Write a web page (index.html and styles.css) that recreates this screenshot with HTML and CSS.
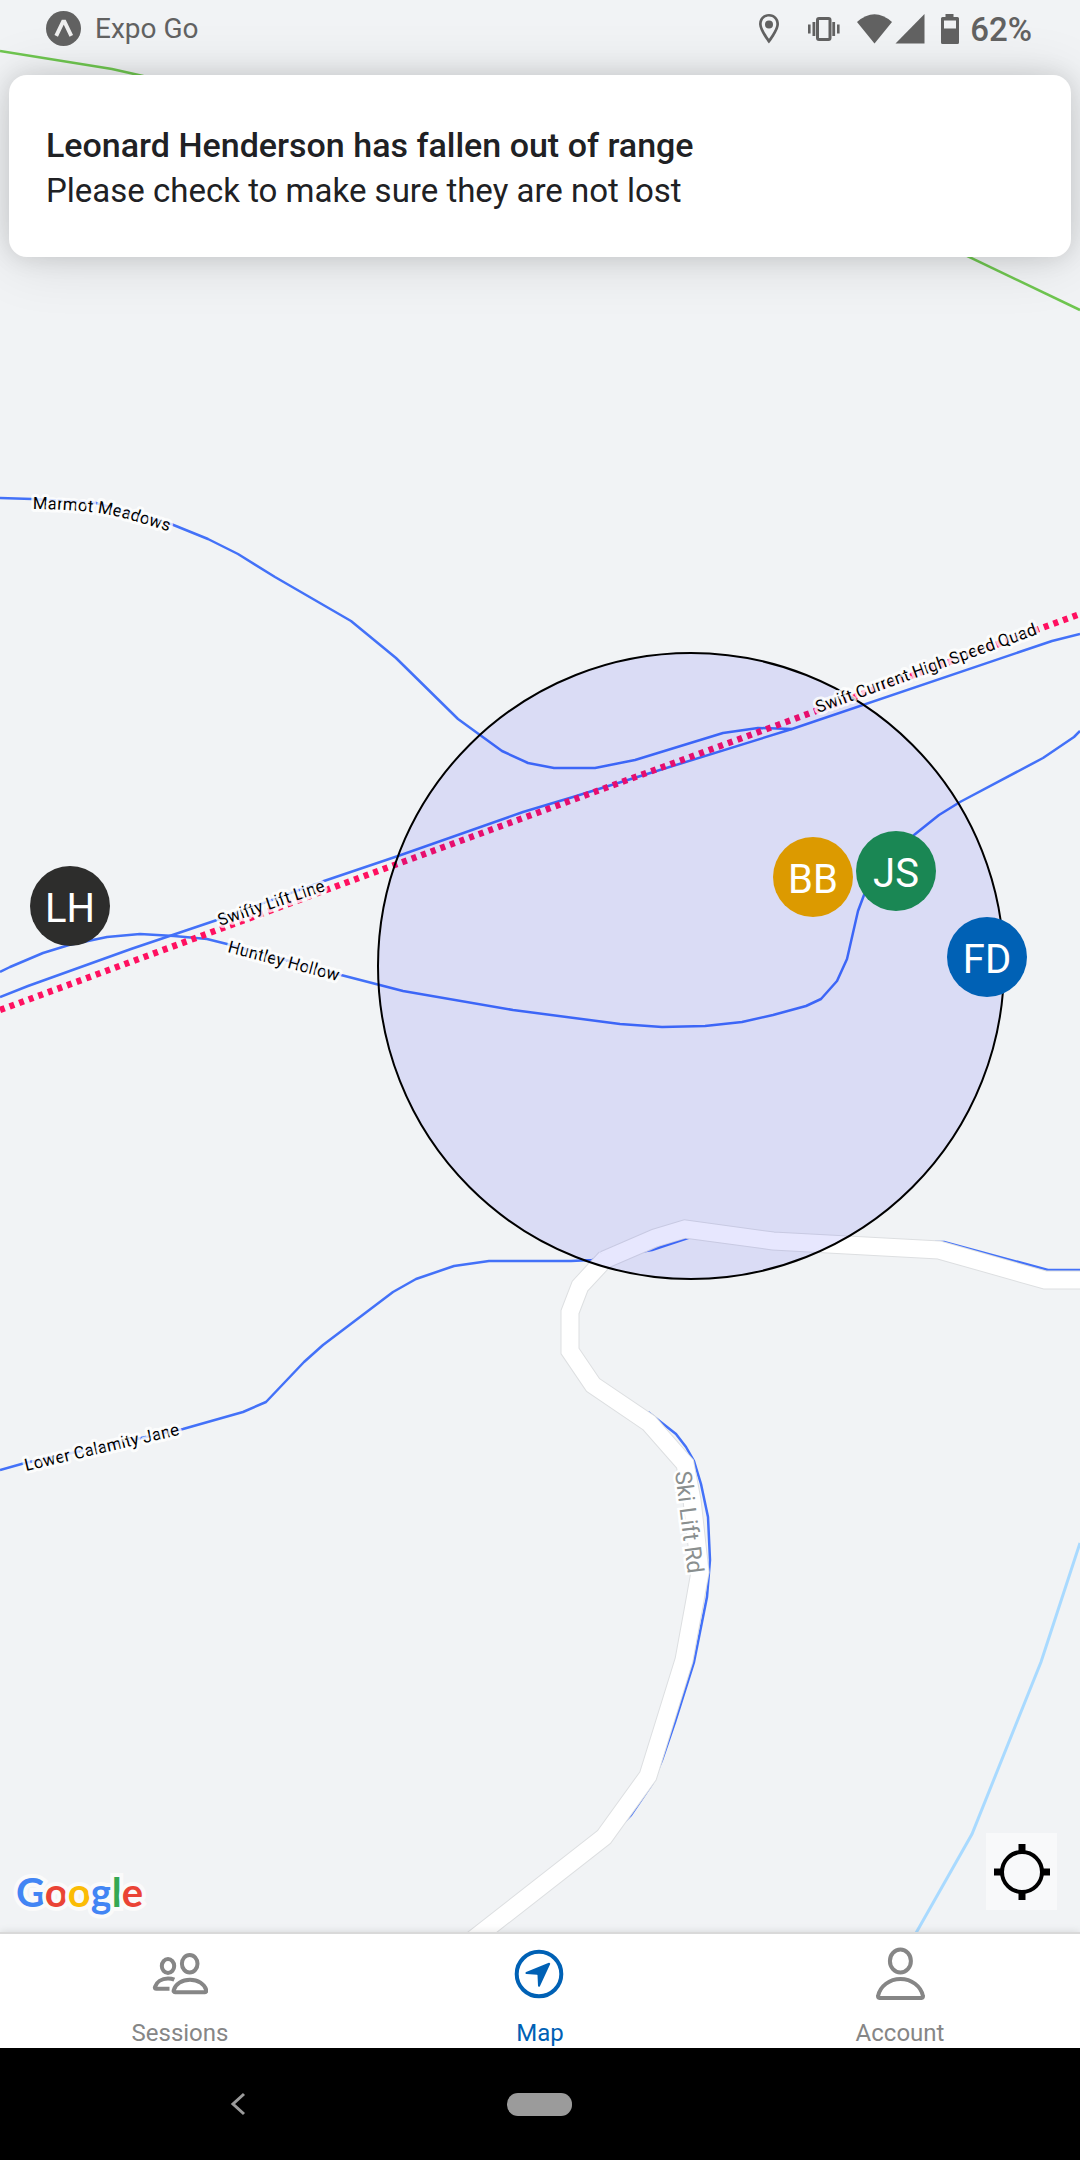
FILE: index.html
```html
<!DOCTYPE html>
<html lang="en">
<head>
<meta charset="utf-8">
<meta name="viewport" content="width=device-width, initial-scale=1">
<title>Map</title>
<link rel="stylesheet" href="styles.css">
</head>
<body>
<main class="map-screen">
  <svg class="map" viewBox="0 0 1080 1932" preserveAspectRatio="xMidYMid slice" role="group" aria-label="Trail map">
    <defs>
      <path id="label-marmot" d="M33 509 Q60 509 91 512 Q116 515 138 522 L180 535"/>
      <path id="label-swifty" d="M220 926 L340 886"/>
      <path id="label-huntley" d="M227 952 L360 987"/>
      <path id="label-calamity" d="M26 1471 L200 1430"/>
      <path id="label-quad" d="M818 713 L1080 619"/>
      <path id="label-road" d="M675 1472 L690 1592"/>
    </defs>

    <g class="boundary">
      <path d="M0 51 L112 69 L143 76 L180 90"/>
      <path d="M940 243 L1080 310"/>
    </g>
    <path class="river" d="M1080 1543 L1041 1662 L972 1834 L916 1933"/>

    <g class="trail">
      <path d="M0 498 L32 499 L96 503 L171 524 L208 539 L238 554 L275 577 L351 621 L396 658 L458 719 L502 751 L528 763 L554 768 L595 768 L635 760 L723 733 L758 728 L792 729"/>
      <path d="M0 997 L28 986 L131 949 L217 920 L324 881 L398 856 L523 812 L573 797 L647 774 L792 729 L1052 641 L1080 634"/>
      <path d="M0 972 L10 967 L43 953 L69 945 L107 937 L140 934 L174 936 L207 939 L227 944 L341 975 L403 991 L513 1010 L620 1024 L662 1027 L705 1026 L742 1022 L773 1015 L806 1006 L821 999 L837 981 L847 959 L858 911 L864 895 L890 856 L914 835 L939 815 L960 802 L1043 758 L1074 737 L1080 731"/>
      <path d="M0 1470 L25 1463 L183 1429 L243 1412 L266 1402 L304 1362 L323 1345 L393 1292 L416 1279 L454 1266 L489 1261 L571 1261 L592 1260 L652 1250 L688 1238 L700 1235"/>
      <path d="M935 1242 L944 1242 L1048 1270 L1080 1270"/>
      <path d="M648 1412 L676 1434 L686 1447 L694 1461 L701 1484 L708 1517 L710 1560 L707 1597 L694 1662 L675 1722 L662 1760 L652 1784 L631 1815 L612 1834"/>
    </g>

    <path class="lift" d="M0 1010 L367 875 L775 726 L1080 614"/>

    <g class="road-edge">
      <path d="M604 1260 L655 1238 L685 1229 L773 1241 L939 1250 L1045 1280 L1090 1280"/>
      <path d="M606 1258 L580 1286 L570 1312 L570 1351 L593 1385 L649 1423 L685 1464 L692 1500 L700 1572 L695 1600 L684 1660 L648 1776 L604 1837 L457 1952"/>
    </g>
    <g class="road">
      <path d="M604 1260 L655 1238 L685 1229 L773 1241 L939 1250 L1045 1280 L1090 1280"/>
      <path d="M606 1258 L580 1286 L570 1312 L570 1351 L593 1385 L649 1423 L685 1464 L692 1500 L700 1572 L695 1600 L684 1660 L648 1776 L604 1837 L457 1952"/>
    </g>

    <circle class="range" cx="691" cy="966" r="313"/>

    <g class="label">
      <text><textPath href="#label-marmot">Marmot Meadows</textPath></text>
      <text><textPath href="#label-swifty">Swifty Lift Line</textPath></text>
      <text><textPath href="#label-huntley">Huntley Hollow</textPath></text>
      <text><textPath href="#label-calamity">Lower Calamity Jane</textPath></text>
      <text><textPath href="#label-quad">Swift Current High Speed Quad</textPath></text>
    </g>
    <text class="road-label"><textPath href="#label-road">Ski Lift Rd</textPath></text>

    <g class="pin">
      <circle class="pin-lh" cx="70" cy="906" r="40"/><text x="70" y="922">LH</text>
      <circle class="pin-bb" cx="813" cy="877" r="40"/><text x="813" y="893">BB</text>
      <circle class="pin-js" cx="896" cy="871" r="40"/><text x="896" y="887">JS</text>
      <circle class="pin-fd" cx="987" cy="957" r="40"/><text x="987" y="973">FD</text>
    </g>
  </svg>

  <header class="status-bar">
    <svg class="expo" viewBox="0 0 36 36" aria-hidden="true"><circle cx="18" cy="18" r="18"/><path d="M10.500 25.500L17.500 11h1.500L26 25.500"/></svg>
    <span class="app-name">Expo Go</span>
    <svg class="status-icons" viewBox="0 0 204 34" aria-hidden="true">
      <path fill-rule="evenodd" d="M12 3C6 3 2 7.500 2 13c0 7 10 19.500 10 19.500S22 20 22 13C22 7.500 18 3 12 3zm0 2.600c4.400 0 7.300 3.300 7.300 7.400 0 4.200-4.600 11-7.300 14.800C9.300 24 4.700 17.200 4.700 13c0-4.100 2.900-7.400 7.300-7.400z"/><circle cx="12" cy="13.500" r="4"/>
      <rect class="outline" x="60.500" y="7.500" width="12.500" height="21" rx="1.500"/>
      <path d="M55.500 11h2.800v14h-2.800zM51 13.500h2.600v9h-2.600zM75.300 11h2.800v14h-2.800zM80 13.500h2.600v9h-2.600z"/>
      <path d="M100 11Q117.500-4.500 135 11L117.500 32.500z"/>
      <path d="M138.500 32.500L167.500 3v29.500z"/>
      <path fill-rule="evenodd" d="M188.500 3h8v3h4q1.500 0 1.500 1.500v24q0 1.500-1.500 1.500h-15q-1.500 0-1.500-1.500v-24Q184 6 185.500 6h3zM187 9.500v8h12v-8z"/>
    </svg>
    <span class="battery">62%</span>
  </header>

  <section class="alert" role="alert">
    <h1 class="alert-title">Leonard Henderson has fallen out of range</h1>
    <p class="alert-text">Please check to make sure they are not lost</p>
  </section>

  <div class="map-footer">
    <div class="google"><span class="g-blue">G</span><span class="g-red">o</span><span class="g-yellow">o</span><span class="g-blue">g</span><span class="g-green">l</span><span class="g-red">e</span></div>
    <button class="locate" type="button" aria-label="Centre on my location">
      <svg viewBox="0 0 56 56" aria-hidden="true"><circle cx="28" cy="28" r="20"/><path d="M28 0v8M28 48v8M0 28h8M48 28h8"/></svg>
    </button>
  </div>
</main>

<nav class="tabs" aria-label="Main">
  <a class="tab" href="#sessions">
    <svg class="tab-icon" viewBox="0 0 56 56" aria-hidden="true"><ellipse cx="16" cy="20" rx="6.200" ry="7"/><ellipse cx="37.700" cy="17.700" rx="7.800" ry="8.800"/><path d="M23 46.200h30c1.200 0 1.600-.9 1.300-2C52.500 38 46 33.800 38 33.800S23.500 38 21.700 44.200c-.3 1.100.1 2 1.300 2z"/><path d="M17.500 42.800H4.500c-1.500 0-2-.8-1.500-2C4.500 36 9.500 32.500 16 32.500c2.500 0 4.500.4 6.300 1.200"/></svg>
    <span>Sessions</span>
  </a>
  <a class="tab tab-active" href="#map" aria-current="page">
    <svg class="tab-icon" viewBox="0 0 56 56" aria-hidden="true"><circle cx="27" cy="28" r="22.300"/><path class="solid" d="M37.200 17.800L14.500 27l10.800.8a1.500 1.500 0 0 1 1.200 1.200L27 39.800z"/></svg>
    <span>Map</span>
  </a>
  <a class="tab" href="#account">
    <svg class="tab-icon" viewBox="0 0 56 56" aria-hidden="true"><ellipse cx="28.400" cy="15" rx="10.500" ry="11.500"/><path d="M7.500 52h42c1.300 0 1.700-1 1.400-2.200C48.800 40 39.500 33 28.500 33S8.200 40 6.100 49.800C5.800 51 6.200 52 7.500 52z"/></svg>
    <span>Account</span>
  </a>
</nav>

<div class="system-nav">
  <button class="back" type="button" aria-label="Back"><svg viewBox="0 0 16 24" aria-hidden="true"><path d="M14 2L3 12l11 10"/></svg></button>
  <button class="home" type="button" aria-label="Home"></button>
</div>
</body>
</html>
```
FILE: styles.css
```css
* { box-sizing: border-box; }

body {
  margin: 0;
  min-height: 100vh;
  display: flex;
  flex-direction: column;
  font-family: Roboto, "Liberation Sans", sans-serif;
  background: #000;
}

button { padding: 0; border: 0; cursor: pointer; }

/* Map */
.map-screen {
  position: relative;
  flex: 1;
  display: flex;
  flex-direction: column;
  overflow: hidden;
  background: #f1f3f5;
}

.map {
  position: absolute;
  inset: 0;
  width: 100%;
  height: 100%;
}

.boundary, .trail, .river, .lift, .road, .road-edge { fill: none; }
.boundary { stroke: #6fc650; stroke-width: 2.5; }
.river { stroke: #a9daff; stroke-width: 3; }
.trail { stroke: #4371f8; stroke-width: 2.5; stroke-linejoin: round; }
.lift { stroke: #ff1060; stroke-width: 6.5; stroke-dasharray: 5 5.2; }
.road-edge { stroke: #dddfe1; stroke-width: 19; }
.road { stroke: #fff; stroke-width: 17; }
.range { fill: rgba(0, 0, 240, 0.095); stroke: #000; stroke-width: 2; }

.label {
  font-size: 17px;
  fill: #000;
  stroke: rgba(255, 255, 255, 0.8);
  stroke-width: 6;
  stroke-linejoin: round;
  paint-order: stroke;
}

.road-label {
  font-size: 23px;
  fill: #8a8f8f;
  stroke: #fff;
  stroke-width: 5;
  paint-order: stroke;
}

.pin { font-size: 40px; text-anchor: middle; }
.pin text { fill: #fff; }
.pin-lh { fill: #2d2d2c; }
.pin-bb { fill: #dc9a00; }
.pin-js { fill: #1a8754; }
.pin-fd { fill: #0061b5; }

/* Status bar */
.status-bar {
  position: relative;
  z-index: 1;
  display: flex;
  align-items: center;
  height: 56px;
  padding: 0 48px 0 46px;
  color: #616161;
  fill: #616161;
}

.expo { width: 35px; height: 35px; }
.expo path { fill: none; stroke: #eee; stroke-width: 4; }
.app-name { margin-left: 14px; font-size: 28px; }
.status-icons { width: 204px; height: 34px; margin-left: auto; }
.status-icons .outline { fill: none; stroke: #616161; stroke-width: 3; }
.battery { margin-left: 9px; padding-top: 3px; font-size: 33px; font-weight: 500; line-height: 40px; }

/* Alert card */
.alert {
  position: relative;
  margin: 19px 9px 0;
  padding: 48px 37px 44px;
  border-radius: 18px;
  background: #fff;
  color: #202124;
  box-shadow: 0 0 24px rgba(0, 0, 0, 0.12), 0 4px 60px rgba(0, 0, 0, 0.12);
}

.alert-title, .alert-text { margin: 0; line-height: 45px; }
.alert-title { font-size: 34px; font-weight: 500; }
.alert-text { font-size: 33px; }

/* Attribution and locate control */
.map-footer {
  position: relative;
  display: flex;
  align-items: flex-end;
  justify-content: space-between;
  margin-top: auto;
  padding: 0 23px 22px 16px;
}

.google {
  font-family: Lato, sans-serif;
  font-size: 40px;
  font-weight: 700;
  line-height: 36px;
  -webkit-text-stroke: 8px #fafafa;
  paint-order: stroke;
}

.g-blue { color: #4285f4; }
.g-red { color: #ea4335; }
.g-yellow { color: #fbbc05; }
.g-green { color: #34a853; }

.locate {
  display: grid;
  place-items: center;
  width: 71px;
  height: 77px;
  background: #f8f9fa;
}

.locate svg { width: 56px; height: 56px; fill: none; stroke: #000; stroke-width: 4; }
.locate path { stroke-width: 7; }

/* Tab bar */
.tabs {
  position: relative;
  display: grid;
  grid-template-columns: repeat(3, 1fr);
  border-top: 2px solid #d9d9d9;
  background: #fff;
  box-shadow: 0 0 8px rgba(0, 0, 0, 0.12);
}

.tab {
  display: flex;
  flex-direction: column;
  align-items: center;
  gap: 17px;
  padding: 12px 0 1px;
  color: #868686;
  font-size: 24px;
  line-height: 28px;
  text-decoration: none;
}

.tab-active { color: #0061b5; }
.tab-icon { width: 56px; height: 56px; fill: none; stroke: currentColor; stroke-width: 4; stroke-linejoin: round; }
.tab-icon .solid { fill: currentColor; stroke-width: 2; }

/* System navigation */
.system-nav {
  position: relative;
  display: grid;
  grid-template-columns: 44% 12% 44%;
  place-items: center;
  height: 112px;
  background: #000;
}

.back { width: 16px; height: 24px; background: none; }
.back svg { display: block; fill: none; stroke: #9b9b9b; stroke-width: 3; }
.home { width: 65px; height: 23px; border-radius: 11px; background: #9b9b9b; }
```
